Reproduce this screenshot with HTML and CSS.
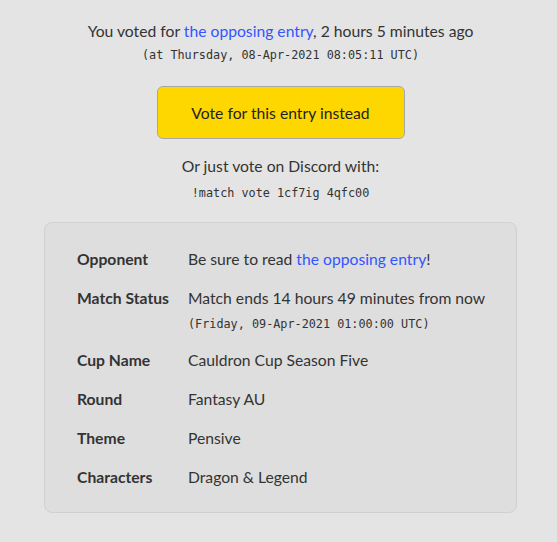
FILE: index.html
```html
<!DOCTYPE html>
<html>
<head>
<meta charset="utf-8">
<link rel="stylesheet" href="styles.css">
</head>
<body>
<div class="page">
  <section class="vote">
    <p class="voted">You voted for <a href="#">the opposing entry</a>, 2 hours 5 minutes ago</p>
    <p class="mono">(at Thursday, 08-Apr-2021 08:05:11 UTC)</p>
    <button class="btn">Vote for this entry instead</button>
    <p class="discord">Or just vote on Discord with:</p>
    <p class="mono cmd">!match vote 1cf7ig 4qfc00</p>
  </section>
  <section class="card">
    <div class="row"><div class="label">Opponent</div><div class="value">Be sure to read <a href="#">the opposing entry</a>!</div></div>
    <div class="row"><div class="label">Match Status</div><div class="value">Match ends 14 hours 49 minutes from now<div class="mono sub">(Friday, 09-Apr-2021 01:00:00 UTC)</div></div></div>
    <div class="row"><div class="label">Cup Name</div><div class="value">Cauldron Cup Season Five</div></div>
    <div class="row"><div class="label">Round</div><div class="value">Fantasy AU</div></div>
    <div class="row"><div class="label">Theme</div><div class="value">Pensive</div></div>
    <div class="row"><div class="label">Characters</div><div class="value">Dragon &amp; Legend</div></div>
  </section>
</div>
</body>
</html>
```
FILE: styles.css
```css
html, body {
  margin: 0;
  padding: 0;
  background: #e4e4e4;
}
body {
  font-family: Lato, "Liberation Sans", sans-serif;
  font-size: 15.7px;
  color: #333333;
}
a {
  color: #3355ff;
  text-decoration: none;
}
p { margin: 0; }
.page {
  padding: 19px 39px 30px 44px;
  width: 473px;
}
.vote {
  display: flex;
  flex-direction: column;
  align-items: center;
  text-align: center;
}
.voted {
  line-height: 24px;
}
.mono {
  font-family: "DejaVu Sans Mono", "Liberation Mono", monospace;
  font-size: 11.8px;
  line-height: 24px;
}
.cmd {
  margin-top: 3px;
}
.btn {
  margin-top: 19px;
  width: 248px;
  height: 53px;
  background: #ffd700;
  border: 1px solid #a8a8a8;
  border-radius: 6px;
  font-family: Lato, "Liberation Sans", sans-serif;
  font-size: 15.7px;
  color: #222222;
  padding: 0;
}
.discord {
  margin-top: 15px;
  line-height: 24px;
}
.card {
  margin-top: 17px;
  background: #dedede;
  border: 1px solid #d0d0d0;
  border-radius: 8px;
  padding: 24px 16px 23px 32px;
  display: flex;
  flex-direction: column;
  gap: 15px;
}
.row {
  display: grid;
  grid-template-columns: 111px 1fr;
  line-height: 24px;
}
.label {
  font-weight: bold;
}
.sub {
  line-height: 26px;
  margin-top: 1px;
  margin-bottom: -4px;
}
```
